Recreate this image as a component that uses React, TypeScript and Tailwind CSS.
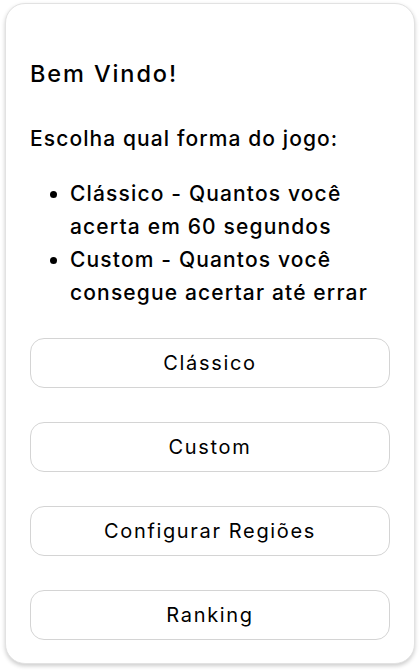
export default function App() {
  const font = { fontFamily: 'Inter, "Noto Sans", sans-serif' };
  const buttons = ["Clássico", "Custom", "Configurar Regiões", "Ranking"];
  return (
    <div className="w-[420px] h-[672px] bg-white pt-[3px] px-[5px]" style={font}>
      <div className="h-[661px] rounded-[20px] border border-[#e2e2e2] bg-white shadow-[0_2px_4px_rgba(0,0,0,0.2)] px-[24px] pt-[54px] pb-[23px] flex flex-col text-black">
        <h2 className="text-[23.5px] leading-[32px] font-medium tracking-[1.9px]">Bem Vindo!</h2>
        <p className="mt-[33px] text-[21px] leading-[32px] font-medium tracking-[1.1px]">Escolha qual forma do jogo:</p>
        <ul className="mt-[22px] list-disc pl-[40px] text-[21px] leading-[33px] font-medium tracking-[1.15px]">
          <li>Clássico - Quantos você acerta em 60 segundos</li>
          <li>Custom - Quantos você consegue acertar até errar</li>
        </ul>
        <div className="mt-[29px] flex flex-col gap-[34px]">
          {buttons.map((b) => (
            <button
              key={b}
              className="h-[50px] w-full rounded-[14px] border border-[#d4d4d4] bg-white text-[20px] font-normal tracking-[1.65px] text-black"
            >
              {b}
            </button>
          ))}
        </div>
      </div>
    </div>
  );
}
